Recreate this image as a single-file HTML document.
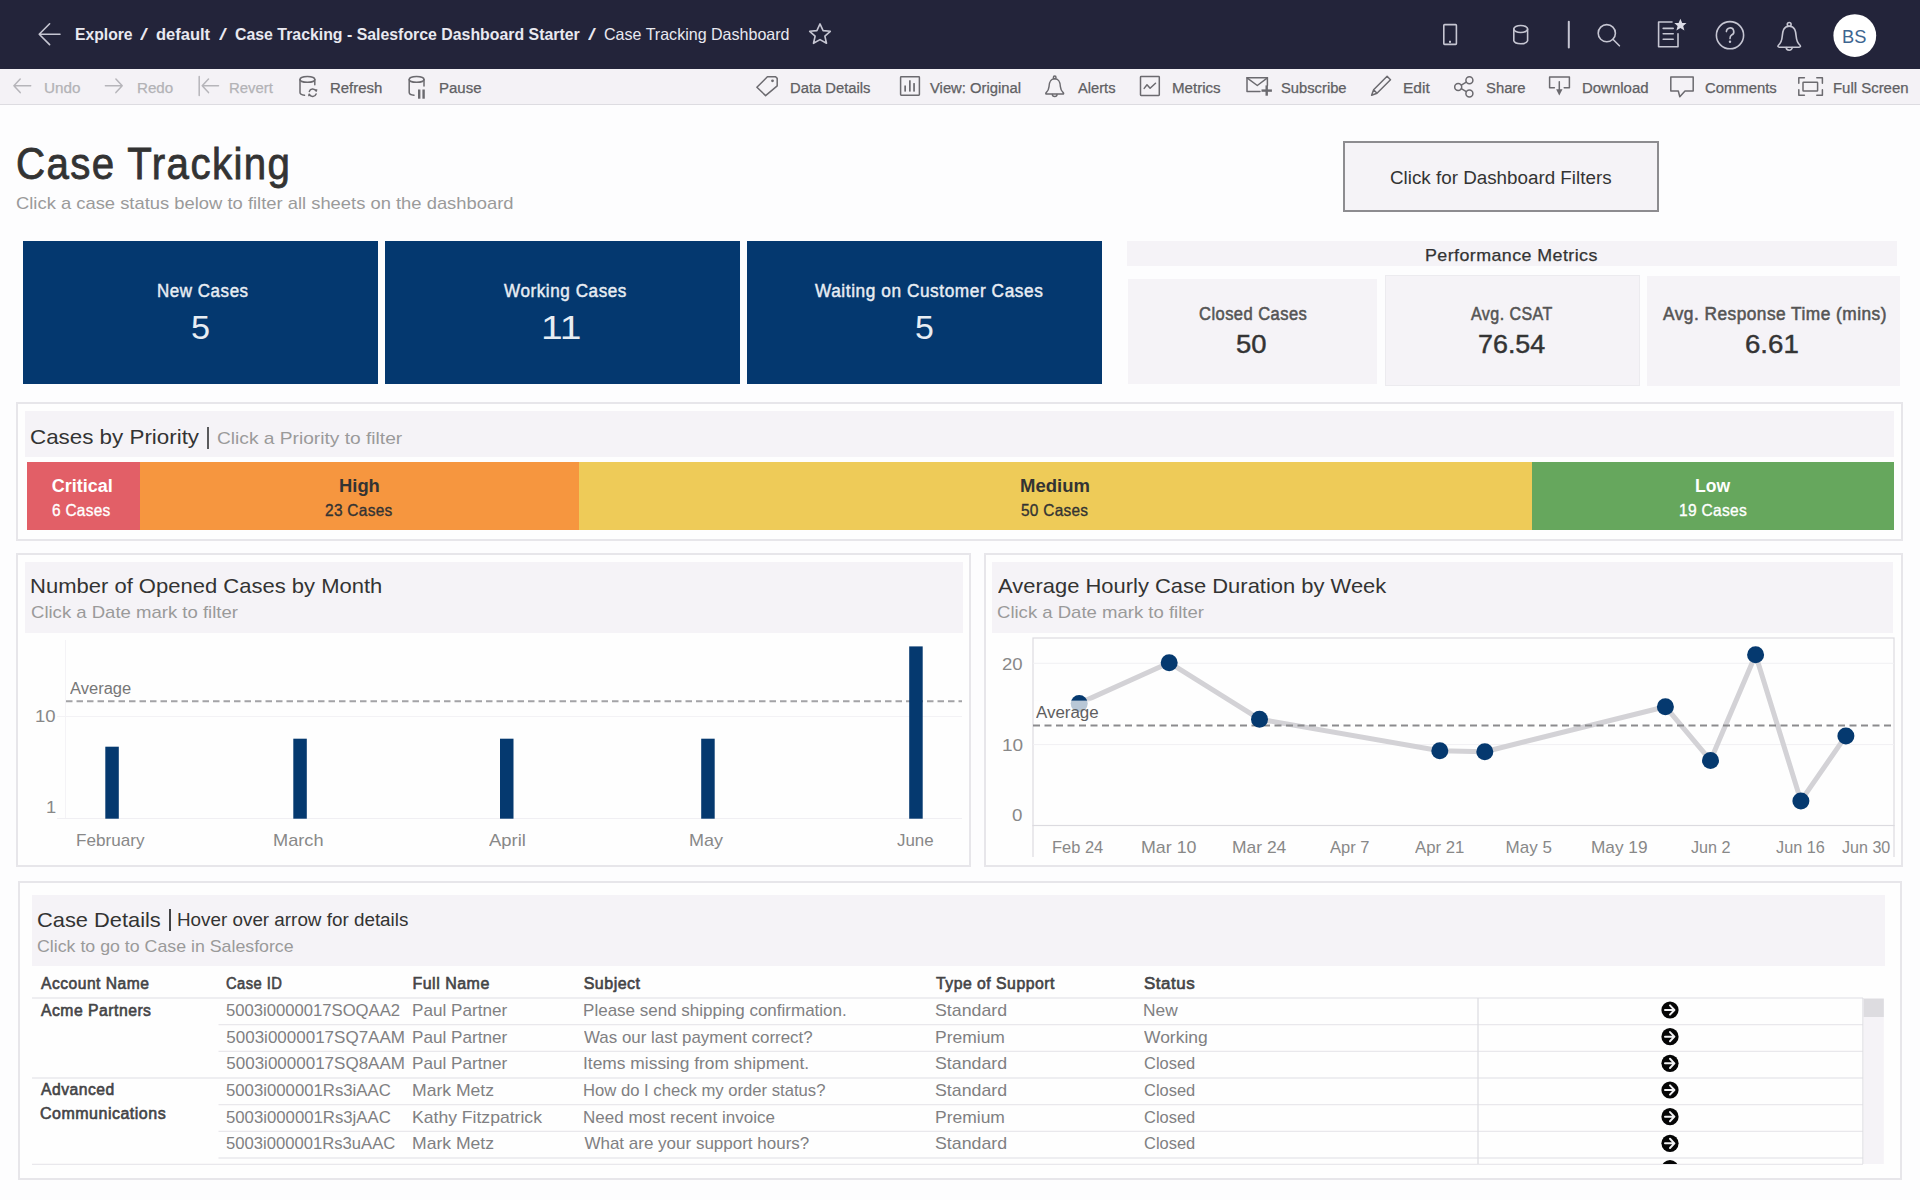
<!DOCTYPE html>
<html><head><meta charset="utf-8"><title>Case Tracking Dashboard</title>
<style>
*{margin:0;padding:0;box-sizing:border-box}
html,body{width:1920px;height:1200px;overflow:hidden}
body{background:#fdfdfe;font-family:"Liberation Sans",sans-serif;position:relative}
.a{position:absolute}
.t{position:absolute;white-space:nowrap;line-height:1;transform-origin:0 0}
</style></head><body>
<div class="a" style="left:0px;top:0px;width:1920px;height:69px;background:#23243a"></div>
<div class="a" style="left:0px;top:69px;width:1920px;height:35px;background:#f4f2f6"></div>
<div class="a" style="left:0px;top:104px;width:1920px;height:1px;background:#dddce1"></div>
<div class="a" style="left:1343px;top:141px;width:316px;height:71px;background:#f5f3f7;border:2px solid #8d8c90"></div>
<div class="a" style="left:23px;top:241px;width:355px;height:143px;background:#04386f"></div>
<div class="a" style="left:385px;top:241px;width:355px;height:143px;background:#04386f"></div>
<div class="a" style="left:747px;top:241px;width:355px;height:143px;background:#04386f"></div>
<div class="a" style="left:1127px;top:241px;width:770px;height:25px;background:#f5f3f7"></div>
<div class="a" style="left:1128px;top:279px;width:249px;height:105px;background:#f5f3f7"></div>
<div class="a" style="left:1385px;top:275px;width:255px;height:111px;background:#f5f3f7;border:1px solid #ecebef"></div>
<div class="a" style="left:1647px;top:276px;width:253px;height:110px;background:#f5f3f7"></div>
<div class="a" style="left:16px;top:402px;width:1887px;height:139px;border:2px solid #e7e6ea;background:#fefefe"></div>
<div class="a" style="left:25px;top:411px;width:1869px;height:46px;background:#f5f3f7"></div>
<div class="a" style="left:27px;top:462px;width:113px;height:68px;background:#e25f67"></div>
<div class="a" style="left:140px;top:462px;width:439px;height:68px;background:#f6963f"></div>
<div class="a" style="left:579px;top:462px;width:953px;height:68px;background:#eecb58"></div>
<div class="a" style="left:1532px;top:462px;width:362px;height:68px;background:#66a75d"></div>
<div class="a" style="left:16px;top:553px;width:955px;height:314px;border:2px solid #e7e6ea;background:#fefefe"></div>
<div class="a" style="left:25px;top:562px;width:938px;height:71px;background:#f5f3f7"></div>
<div class="a" style="left:65px;top:640px;width:1px;height:179px;background:#f4f3f6"></div>
<div class="a" style="left:57px;top:716px;width:905px;height:1px;background:#f3f2f5"></div>
<div class="a" style="left:57px;top:818px;width:905px;height:1px;background:#f0eff3"></div>
<div class="a" style="left:984px;top:553px;width:919px;height:314px;border:2px solid #e7e6ea;background:#fefefe"></div>
<div class="a" style="left:992px;top:562px;width:901px;height:71px;background:#f5f3f7"></div>
<div class="a" style="left:18px;top:881px;width:1884px;height:299px;border:2px solid #e7e6ea;background:#fefefe"></div>
<div class="a" style="left:32px;top:895px;width:1853px;height:71px;background:#f5f3f7"></div>
<div class="a" style="left:207px;top:427px;width:2px;height:22px;background:#5a5a5c"></div>
<div class="a" style="left:169px;top:909px;width:2px;height:22px;background:#444446"></div>

<svg class="a" style="left:0;top:0" width="1920" height="1200" viewBox="0 0 1920 1200">
 <!-- bar chart -->
 <line x1="66" y1="701.3" x2="962" y2="701.3" stroke="#a3a3a6" stroke-width="2" stroke-dasharray="6.5 4"/>
 <g fill="#05396f">
  <rect x="105.3" y="746.7" width="13.5" height="72"/>
  <rect x="293.3" y="738.7" width="13.5" height="80"/>
  <rect x="500" y="738.7" width="13.5" height="80"/>
  <rect x="701.2" y="738.7" width="13.5" height="80"/>
  <rect x="909.2" y="646.4" width="13.5" height="172.3"/>
 </g>
 <!-- line chart -->
 <rect x="1033" y="638" width="861" height="187.5" fill="none" stroke="#dcdbe0" stroke-width="1.2"/>
 <line x1="1033" y1="825" x2="1033" y2="857" stroke="#dcdbe0" stroke-width="1.2"/>
 <line x1="1894" y1="825" x2="1894" y2="857" stroke="#dcdbe0" stroke-width="1.2"/>
 <line x1="1033" y1="663.3" x2="1894" y2="663.3" stroke="#f1f0f3" stroke-width="1"/>
 <line x1="1033" y1="744.6" x2="1894" y2="744.6" stroke="#f1f0f3" stroke-width="1"/>
 <polyline fill="none" stroke="#d3d2d6" stroke-width="5" stroke-linejoin="round" points="1079.2,703.4 1169.2,662.7 1259.5,719.2 1439.8,750.7 1484.8,751.7 1665.4,706.7 1710.5,760.4 1755.6,654.7 1800.9,800.9 1845.9,735.9"/>
 <line x1="1033" y1="725.5" x2="1894" y2="725.5" stroke="#8b8b8e" stroke-width="2.2" stroke-dasharray="7 4.5"/>
 <g fill="#05396f">
  <circle cx="1079.2" cy="703.4" r="8.5"/>
  <circle cx="1169.2" cy="662.7" r="8.5"/>
  <circle cx="1259.5" cy="719.2" r="8.5"/>
  <circle cx="1439.8" cy="750.7" r="8.5"/>
  <circle cx="1484.8" cy="751.7" r="8.5"/>
  <circle cx="1665.4" cy="706.7" r="8.5"/>
  <circle cx="1710.5" cy="760.4" r="8.5"/>
  <circle cx="1755.6" cy="654.7" r="8.5"/>
  <circle cx="1800.9" cy="800.9" r="8.5"/>
  <circle cx="1845.9" cy="735.9" r="8.5"/>
 </g>
 <rect x="1034" y="700.6" width="65" height="22" fill="#fefefe" fill-opacity="0.72"/>
</svg>


<svg class="a" style="left:0;top:0" width="1920" height="110" viewBox="0 0 1920 110">
 <g fill="none" stroke="#c6c6d2" stroke-width="1.6" stroke-linecap="round" stroke-linejoin="round">
  <path d="M60 34.2 H39.2 M49.6 23.8 L39.2 34.2 L49.6 44.6"/>
  <path d="M820 23.9 L823.1 30.6 L830.3 31.3 L824.9 36.2 L826.5 43.3 L820 39.6 L813.5 43.3 L815.1 36.2 L809.7 31.3 L816.9 30.6 Z"/>
  <rect x="1443.8" y="24.6" width="12.6" height="19.8" rx="0.8"/>
  <path d="M1513.8 29 V40.8 A7 3.6 0 0 0 1527.6 40.8 V29"/>
  <ellipse cx="1520.7" cy="29" rx="6.9" ry="3.5"/>
  <circle cx="1606.8" cy="33.2" r="8.6"/>
  <path d="M1612.9 39.3 L1619.4 45.8"/>
  <path d="M1672 22 H1658.6 V46.8 H1678 V33.8"/>
  <path d="M1663.2 28.4 H1673.2 M1663.2 33.8 H1673.2 M1663.2 39.2 H1673.2"/>
  <circle cx="1730" cy="35.2" r="13.6"/>
  <path d="M1726.4 31.6 A3.7 3.7 0 1 1 1731.6 35 C1730.3 35.8 1730 36.6 1730 38.6"/>
  <path d="M1789.2 26.3 C1783.5 26.3 1782.6 31 1782.2 36.5 C1781.8 41.5 1781 42.8 1778.6 45 C1777.4 46.2 1778 47.2 1779.3 47.2 H1799.1 C1800.4 47.2 1801 46.2 1799.8 45 C1797.4 42.8 1796.6 41.5 1796.2 36.5 C1795.8 31 1794.9 26.3 1789.2 26.3 Z"/>
  <circle cx="1789.2" cy="24.4" r="1.9"/>
  <path d="M1786.2 47.6 A3 2.6 0 0 0 1792.2 47.6"/>
  <line x1="1568.8" y1="21.8" x2="1568.8" y2="47.4" stroke-width="2"/>
 </g>
 <circle cx="1730" cy="41.7" r="1.2" fill="#c6c6d2"/>
 <rect x="1449" y="40.8" width="2" height="2" fill="#c6c6d2"/>
 <path d="M1680.4 18.8 L1682.2 22.9 L1686.5 23.1 L1683.2 26 L1684.4 30.4 L1680.4 28 L1676.4 30.4 L1677.6 26 L1674.3 23.1 L1678.6 22.9 Z" fill="#dcdce6"/>
 <circle cx="1854.8" cy="35.6" r="21.4" fill="#ffffff"/>
 <!-- toolbar -->
 <g fill="none" stroke="#b6b5ba" stroke-width="1.5" stroke-linecap="round" stroke-linejoin="round">
  <path d="M30.7 85.8 H13.9 M20.2 79 L13.9 85.8 L20.2 92.6"/>
  <path d="M105.4 85.8 H122.2 M115.9 79 L122.2 85.8 L115.9 92.6"/>
  <path d="M199.2 76.4 V95.6 M218.5 85.8 H202.2 M208.5 79 L202.2 85.8 L208.5 92.6"/>
 </g>
 <g fill="none" stroke="#6b6a6f" stroke-width="1.5" stroke-linecap="round" stroke-linejoin="round">
  <ellipse cx="307.4" cy="79.4" rx="7.4" ry="2.9"/>
  <path d="M300 79.4 V92.5 C300 94 301.8 95 304.5 95.3"/>
  <path d="M314.8 79.4 V84.8"/>
  <path d="M309.3 91.4 A3.6 3.6 0 0 1 316 91 M316.1 93.9 A3.6 3.6 0 0 1 309.4 94.3"/>
  <ellipse cx="416.6" cy="79.4" rx="7.4" ry="2.9"/>
  <path d="M409.2 79.4 V92.5 C409.2 94 411 95 414 95.3"/>
  <path d="M424 79.4 V86"/>
  <polygon points="756.9,87.3 767.4,76.8 775.6,76.8 777.2,78.4 777.2,85.9 765.6,95.6"/>
  <rect x="900.6" y="76.8" width="18.8" height="18.4" rx="0.6"/>
  <path d="M1054.7 78.8 C1050 78.8 1049.3 82.5 1049 86.8 C1048.7 90.3 1047.6 91.4 1046.2 92.6 C1045.4 93.4 1045.8 94.1 1046.7 94.1 H1062.7 C1063.6 94.1 1064 93.4 1063.2 92.6 C1061.8 91.4 1060.7 90.3 1060.4 86.8 C1060.1 82.5 1059.4 78.8 1054.7 78.8 Z"/>
  <circle cx="1054.7" cy="77.4" r="1.3"/>
  <path d="M1052.4 94.4 A2.3 2 0 0 0 1057 94.4"/>
  <rect x="1140.5" y="76.6" width="18.8" height="18.8" rx="0.6"/>
  <path d="M1144.2 88.4 L1147 84.8 L1150.1 88.2 L1155.5 83.3"/>
  <path d="M1260 91.5 H1247 V77.8 H1267.4 V85.4"/>
  <path d="M1247 77.8 L1257.3 85.5 L1267.4 77.8"/>
  <path d="M1373.6 89.8 L1387.1 76.3 L1390.5 79.7 L1377 93.2 Z M1373.6 89.8 L1371.6 95.3 L1377 93.2"/>
  <circle cx="1469.4" cy="80.2" r="3.5"/>
  <circle cx="1458.2" cy="86.9" r="3.5"/>
  <circle cx="1469.4" cy="93.6" r="3.5"/>
  <path d="M1461.3 85.1 L1466.3 82.1 M1461.3 88.7 L1466.3 91.7"/>
  <path d="M1554.4 87.8 H1549.6 V76.9 H1569.4 V87.8 H1564.2"/>
  <path d="M1559.3 81.8 V90"/>
  <path d="M1670.8 76.9 H1693.2 V91 H1685 L1679.8 96.8 L1678.3 91 H1670.8 Z"/>
  <path d="M1798.8 83.2 V77.8 H1804.4 M1816.8 77.8 H1822.4 V83.2 M1822.4 89.8 V95.2 H1816.8 M1804.4 95.2 H1798.8 V89.8"/>
  <rect x="1803" y="82.2" width="14.6" height="8.8" rx="0.6"/>
 </g>
 <g fill="#6b6a6f">
  <circle cx="772.5" cy="80.8" r="1.4"/>
  <rect x="904.3" y="85.5" width="1.7" height="6.1"/>
  <rect x="909" y="80.3" width="1.7" height="11.3"/>
  <rect x="913.2" y="83.1" width="1.7" height="8.5"/>
  <rect x="1261.5" y="89.4" width="10.4" height="2.4"/>
  <rect x="1265.5" y="85.4" width="2.4" height="10.3"/>
  <rect x="418" y="89.5" width="2.4" height="9.2"/>
  <rect x="422.4" y="89.5" width="2.4" height="9.2"/>
  <polygon points="1556.1,89.2 1562.5,89.2 1559.3,95.6"/>
  <polygon points="314.6,89.3 317.4,89.2 316.9,92"/>
  <polygon points="310.8,96.1 308,96.2 308.5,93.4"/>
 </g>
</svg>


<svg class="a" style="left:0;top:0" width="1920" height="1200" viewBox="0 0 1920 1200">
 <g stroke="#e9e8ec" stroke-width="1.3">
  <line x1="32" y1="998" x2="1863" y2="998"/>
  <line x1="218.5" y1="1024.6" x2="1863" y2="1024.6"/>
  <line x1="218.5" y1="1051.3" x2="1863" y2="1051.3"/>
  <line x1="32" y1="1078" x2="1863" y2="1078"/>
  <line x1="218.5" y1="1104.7" x2="1863" y2="1104.7"/>
  <line x1="218.5" y1="1131.4" x2="1863" y2="1131.4"/>
  <line x1="218.5" y1="1158" x2="1863" y2="1158"/>
  <line x1="32" y1="1164.3" x2="1863" y2="1164.3"/>
 </g>
 <line x1="1478" y1="998" x2="1478" y2="1164" stroke="#dedde2" stroke-width="1.3"/>
 <line x1="1863" y1="998" x2="1863" y2="1164" stroke="#dedde2" stroke-width="1.3"/>
 <rect x="1863.6" y="998.6" width="20.2" height="165.4" fill="#f5f3f7"/>
 <rect x="1863.6" y="998.6" width="20.2" height="18.4" fill="#dddce0"/>
 <circle cx="1670" cy="1010.00" r="8.6" fill="#050505"/><path d="M1665 1010.00 H1674 M1670 1005.40 L1674.4 1010.00 L1670 1014.60" fill="none" stroke="#f2f2f4" stroke-width="2" stroke-linecap="round" stroke-linejoin="round"/>
 <circle cx="1670" cy="1036.67" r="8.6" fill="#050505"/><path d="M1665 1036.67 H1674 M1670 1032.07 L1674.4 1036.67 L1670 1041.27" fill="none" stroke="#f2f2f4" stroke-width="2" stroke-linecap="round" stroke-linejoin="round"/>
 <circle cx="1670" cy="1063.34" r="8.6" fill="#050505"/><path d="M1665 1063.34 H1674 M1670 1058.74 L1674.4 1063.34 L1670 1067.94" fill="none" stroke="#f2f2f4" stroke-width="2" stroke-linecap="round" stroke-linejoin="round"/>
 <circle cx="1670" cy="1090.01" r="8.6" fill="#050505"/><path d="M1665 1090.01 H1674 M1670 1085.41 L1674.4 1090.01 L1670 1094.61" fill="none" stroke="#f2f2f4" stroke-width="2" stroke-linecap="round" stroke-linejoin="round"/>
 <circle cx="1670" cy="1116.68" r="8.6" fill="#050505"/><path d="M1665 1116.68 H1674 M1670 1112.08 L1674.4 1116.68 L1670 1121.28" fill="none" stroke="#f2f2f4" stroke-width="2" stroke-linecap="round" stroke-linejoin="round"/>
 <circle cx="1670" cy="1143.35" r="8.6" fill="#050505"/><path d="M1665 1143.35 H1674 M1670 1138.75 L1674.4 1143.35 L1670 1147.95" fill="none" stroke="#f2f2f4" stroke-width="2" stroke-linecap="round" stroke-linejoin="round"/>
</svg>

<div class="t" style="left:74.75px;top:26.43px;font-size:16.5px;color:#e9e9f0;font-weight:700;transform:scaleX(0.9517);">Explore</div>
<div class="t" style="left:140.00px;top:26.43px;font-size:16.5px;color:#e9e9f0;transform:scaleX(1.7391);">/</div>
<div class="t" style="left:156.00px;top:26.43px;font-size:16.5px;color:#e9e9f0;font-weight:700;">default</div>
<div class="t" style="left:218.50px;top:26.43px;font-size:16.5px;color:#e9e9f0;transform:scaleX(1.7391);">/</div>
<div class="t" style="left:234.92px;top:26.43px;font-size:16.5px;color:#e9e9f0;font-weight:700;transform:scaleX(0.9613);">Case Tracking - Salesforce Dashboard Starter</div>
<div class="t" style="left:587.50px;top:26.43px;font-size:16.5px;color:#e9e9f0;transform:scaleX(1.7391);">/</div>
<div class="t" style="left:604.42px;top:26.43px;font-size:16.5px;color:#e9e9f0;transform:scaleX(0.9726);">Case Tracking Dashboard</div>
<div class="t" style="left:44.21px;top:81.35px;font-size:14px;color:#b3b3b6;transform:scaleX(1.0884);-webkit-text-stroke:0.25px #b3b3b6;">Undo</div>
<div class="t" style="left:136.61px;top:81.35px;font-size:14px;color:#b3b3b6;transform:scaleX(1.0824);-webkit-text-stroke:0.25px #b3b3b6;">Redo</div>
<div class="t" style="left:229.33px;top:81.35px;font-size:14px;color:#b3b3b6;transform:scaleX(1.0638);-webkit-text-stroke:0.25px #b3b3b6;">Revert</div>
<div class="t" style="left:330.03px;top:81.35px;font-size:14px;color:#606063;transform:scaleX(1.0673);-webkit-text-stroke:0.25px #606063;">Refresh</div>
<div class="t" style="left:438.62px;top:81.35px;font-size:14px;color:#606063;transform:scaleX(1.0708);-webkit-text-stroke:0.25px #606063;">Pause</div>
<div class="t" style="left:789.64px;top:81.35px;font-size:14px;color:#606063;transform:scaleX(1.0555);-webkit-text-stroke:0.25px #606063;">Data Details</div>
<div class="t" style="left:930.30px;top:81.35px;font-size:14px;color:#606063;transform:scaleX(1.0563);-webkit-text-stroke:0.25px #606063;">View: Original</div>
<div class="t" style="left:1077.80px;top:81.35px;font-size:14px;color:#606063;transform:scaleX(1.0486);-webkit-text-stroke:0.25px #606063;">Alerts</div>
<div class="t" style="left:1171.51px;top:81.35px;font-size:14px;color:#606063;transform:scaleX(1.0779);-webkit-text-stroke:0.25px #606063;">Metrics</div>
<div class="t" style="left:1281.07px;top:81.35px;font-size:14px;color:#606063;transform:scaleX(1.0529);-webkit-text-stroke:0.25px #606063;">Subscribe</div>
<div class="t" style="left:1402.78px;top:81.35px;font-size:14px;color:#606063;transform:scaleX(1.1075);-webkit-text-stroke:0.25px #606063;">Edit</div>
<div class="t" style="left:1486.26px;top:81.35px;font-size:14px;color:#606063;transform:scaleX(1.0588);-webkit-text-stroke:0.25px #606063;">Share</div>
<div class="t" style="left:1582.22px;top:81.35px;font-size:14px;color:#606063;transform:scaleX(1.0684);-webkit-text-stroke:0.25px #606063;">Download</div>
<div class="t" style="left:1704.96px;top:81.35px;font-size:14px;color:#606063;transform:scaleX(1.0604);-webkit-text-stroke:0.25px #606063;">Comments</div>
<div class="t" style="left:1832.83px;top:81.35px;font-size:14px;color:#606063;transform:scaleX(1.0665);-webkit-text-stroke:0.25px #606063;">Full Screen</div>
<div class="t" style="left:15.61px;top:141.75px;font-size:44px;color:#333333;transform:scaleX(0.9154);letter-spacing:1.5px;-webkit-text-stroke:0.8px #333333;">Case Tracking</div>
<div class="t" style="left:15.84px;top:194.61px;font-size:17px;color:#9a9a9a;transform:scaleX(1.0811);">Click a case status below to filter all sheets on the dashboard</div>
<div class="t" style="left:1389.76px;top:168.86px;font-size:18px;color:#333333;transform:scaleX(1.0448);">Click for Dashboard Filters</div>
<div class="t" style="left:156.98px;top:282.46px;font-size:18px;color:#e8edf3;transform:scaleX(0.9406);letter-spacing:0.6px;-webkit-text-stroke:0.45px #e8edf3;">New Cases</div>
<div class="t" style="left:190.63px;top:310.77px;font-size:33px;color:#e8edf3;transform:scaleX(1.0385);">5</div>
<div class="t" style="left:504.20px;top:282.46px;font-size:18px;color:#e8edf3;transform:scaleX(0.9493);letter-spacing:0.6px;-webkit-text-stroke:0.45px #e8edf3;">Working Cases</div>
<div class="t" style="left:540.76px;top:310.77px;font-size:33px;color:#e8edf3;transform:scaleX(1.1829);">11</div>
<div class="t" style="left:814.80px;top:282.46px;font-size:18px;color:#e8edf3;transform:scaleX(0.9578);letter-spacing:0.6px;-webkit-text-stroke:0.45px #e8edf3;">Waiting on Customer Cases</div>
<div class="t" style="left:914.74px;top:310.77px;font-size:33px;color:#e8edf3;transform:scaleX(1.0260);">5</div>
<div class="t" style="left:1425.23px;top:246.71px;font-size:17px;color:#333333;transform:scaleX(1.0511);letter-spacing:0.4px;-webkit-text-stroke:0.25px #333333;">Performance Metrics</div>
<div class="t" style="left:1198.67px;top:305.36px;font-size:18px;color:#555555;transform:scaleX(0.9168);letter-spacing:0.5px;-webkit-text-stroke:0.55px #555555;">Closed Cases</div>
<div class="t" style="left:1235.50px;top:331.94px;font-size:25px;color:#333333;transform:scaleX(1.0964);-webkit-text-stroke:0.45px #383838;">50</div>
<div class="t" style="left:1471.00px;top:305.36px;font-size:18px;color:#555555;transform:scaleX(0.8893);letter-spacing:0.5px;-webkit-text-stroke:0.55px #555555;">Avg. CSAT</div>
<div class="t" style="left:1477.91px;top:331.94px;font-size:25px;color:#333333;transform:scaleX(1.0749);-webkit-text-stroke:0.45px #383838;">76.54</div>
<div class="t" style="left:1663.30px;top:305.36px;font-size:18px;color:#555555;transform:scaleX(0.9600);letter-spacing:0.5px;-webkit-text-stroke:0.55px #555555;">Avg. Response Time (mins)</div>
<div class="t" style="left:1744.87px;top:331.94px;font-size:25px;color:#333333;transform:scaleX(1.1048);-webkit-text-stroke:0.45px #383838;">6.61</div>
<div class="t" style="left:29.93px;top:426.02px;font-size:21px;color:#333333;transform:scaleX(1.0652);">Cases by Priority</div>
<div class="t" style="left:216.60px;top:429.61px;font-size:17px;color:#9a9a9a;transform:scaleX(1.1267);">Click a Priority to filter</div>
<div class="t" style="left:51.80px;top:476.76px;font-size:18px;color:#ffffff;font-weight:700;">Critical</div>
<div class="t" style="left:51.75px;top:502.23px;font-size:16.5px;color:#ffffff;transform:scaleX(0.9347);letter-spacing:0.3px;-webkit-text-stroke:0.35px #ffffff;">6 Cases</div>
<div class="t" style="left:338.77px;top:476.76px;font-size:18px;color:#333333;font-weight:700;transform:scaleX(1.0214);">High</div>
<div class="t" style="left:324.75px;top:502.23px;font-size:16.5px;color:#333333;transform:scaleX(0.9368);letter-spacing:0.3px;-webkit-text-stroke:0.35px #333333;">23 Cases</div>
<div class="t" style="left:1020.27px;top:476.76px;font-size:18px;color:#333333;font-weight:700;transform:scaleX(1.0275);">Medium</div>
<div class="t" style="left:1020.94px;top:502.23px;font-size:16.5px;color:#333333;transform:scaleX(0.9341);letter-spacing:0.3px;-webkit-text-stroke:0.35px #333333;">50 Cases</div>
<div class="t" style="left:1695.33px;top:476.76px;font-size:18px;color:#ffffff;font-weight:700;transform:scaleX(0.9745);">Low</div>
<div class="t" style="left:1678.87px;top:502.23px;font-size:16.5px;color:#ffffff;transform:scaleX(0.9421);letter-spacing:0.3px;-webkit-text-stroke:0.35px #ffffff;">19 Cases</div>
<div class="t" style="left:29.82px;top:575.02px;font-size:21px;color:#333333;transform:scaleX(1.0480);">Number of Opened Cases by Month</div>
<div class="t" style="left:30.73px;top:603.91px;font-size:17px;color:#9a9a9a;transform:scaleX(1.0899);">Click a Date mark to filter</div>
<div class="t" style="left:69.70px;top:680.86px;font-size:16px;color:#777777;transform:scaleX(1.0323);">Average</div>
<div class="t" style="left:35.41px;top:709.26px;font-size:16px;color:#888888;transform:scaleX(1.1564);">10</div>
<div class="t" style="left:45.63px;top:799.76px;font-size:16px;color:#888888;transform:scaleX(1.1429);">1</div>
<div class="t" style="left:76.49px;top:832.31px;font-size:17px;color:#888888;transform:scaleX(1.0071);">February</div>
<div class="t" style="left:273.21px;top:832.31px;font-size:17px;color:#888888;transform:scaleX(1.0696);">March</div>
<div class="t" style="left:488.50px;top:832.31px;font-size:17px;color:#888888;transform:scaleX(1.0841);">April</div>
<div class="t" style="left:689.32px;top:832.31px;font-size:17px;color:#888888;transform:scaleX(1.0579);">May</div>
<div class="t" style="left:897.20px;top:832.31px;font-size:17px;color:#888888;transform:scaleX(0.9942);">June</div>
<div class="t" style="left:998.20px;top:575.02px;font-size:21px;color:#333333;transform:scaleX(1.0450);">Average Hourly Case Duration by Week</div>
<div class="t" style="left:997.33px;top:603.91px;font-size:17px;color:#9a9a9a;transform:scaleX(1.0899);">Click a Date mark to filter</div>
<div class="t" style="left:1035.80px;top:704.66px;font-size:16px;color:#5e5e60;transform:scaleX(1.0562);">Average</div>
<div class="t" style="left:1002.27px;top:656.66px;font-size:16px;color:#888888;transform:scaleX(1.1586);">20</div>
<div class="t" style="left:1001.77px;top:738.36px;font-size:16px;color:#888888;transform:scaleX(1.1876);">10</div>
<div class="t" style="left:1012.30px;top:807.66px;font-size:16px;color:#888888;transform:scaleX(1.1688);">0</div>
<div class="t" style="left:1051.84px;top:838.61px;font-size:17px;color:#888888;transform:scaleX(0.9673);">Feb 24</div>
<div class="t" style="left:1140.84px;top:838.61px;font-size:17px;color:#888888;transform:scaleX(1.0480);">Mar 10</div>
<div class="t" style="left:1231.87px;top:838.61px;font-size:17px;color:#888888;transform:scaleX(1.0263);">Mar 24</div>
<div class="t" style="left:1329.70px;top:838.61px;font-size:17px;color:#888888;transform:scaleX(0.9704);">Apr 7</div>
<div class="t" style="left:1415.30px;top:838.61px;font-size:17px;color:#888888;transform:scaleX(0.9831);">Apr 21</div>
<div class="t" style="left:1505.60px;top:838.61px;font-size:17px;color:#888888;">May 5</div>
<div class="t" style="left:1590.68px;top:838.61px;font-size:17px;color:#888888;transform:scaleX(1.0132);">May 19</div>
<div class="t" style="left:1690.71px;top:838.61px;font-size:17px;color:#888888;transform:scaleX(0.9523);">Jun 2</div>
<div class="t" style="left:1776.31px;top:838.61px;font-size:17px;color:#888888;transform:scaleX(0.9564);">Jun 16</div>
<div class="t" style="left:1841.71px;top:838.61px;font-size:17px;color:#888888;transform:scaleX(0.9465);">Jun 30</div>
<div class="t" style="left:36.96px;top:908.92px;font-size:21px;color:#333333;transform:scaleX(1.0396);">Case Details</div>
<div class="t" style="left:177.23px;top:911.46px;font-size:18px;color:#333333;transform:scaleX(1.0466);">Hover over arrow for details</div>
<div class="t" style="left:37.16px;top:937.61px;font-size:17px;color:#9a9a9a;transform:scaleX(1.0446);">Click to go to Case in Salesforce</div>
<div class="t" style="left:40.80px;top:975.66px;font-size:16px;color:#444446;transform:scaleX(0.9769);letter-spacing:0.5px;-webkit-text-stroke:0.6px #444446;">Account Name</div>
<div class="t" style="left:226.46px;top:975.66px;font-size:16px;color:#444446;transform:scaleX(0.9200);letter-spacing:0.5px;-webkit-text-stroke:0.6px #444446;">Case ID</div>
<div class="t" style="left:412.41px;top:975.66px;font-size:16px;color:#444446;letter-spacing:0.5px;-webkit-text-stroke:0.6px #444446;">Full Name</div>
<div class="t" style="left:583.70px;top:975.66px;font-size:16px;color:#444446;letter-spacing:0.5px;-webkit-text-stroke:0.6px #444446;">Subject</div>
<div class="t" style="left:935.80px;top:975.66px;font-size:16px;color:#444446;transform:scaleX(0.9865);letter-spacing:0.5px;-webkit-text-stroke:0.6px #444446;">Type of Support</div>
<div class="t" style="left:1143.66px;top:975.66px;font-size:16px;color:#444446;transform:scaleX(1.0587);letter-spacing:0.5px;-webkit-text-stroke:0.6px #444446;">Status</div>
<div class="t" style="left:40.80px;top:1002.66px;font-size:16px;color:#444446;transform:scaleX(0.9837);letter-spacing:0.5px;-webkit-text-stroke:0.6px #444446;">Acme Partners</div>
<div class="t" style="left:40.80px;top:1082.46px;font-size:16px;color:#444446;transform:scaleX(0.9801);letter-spacing:0.5px;-webkit-text-stroke:0.6px #444446;">Advanced</div>
<div class="t" style="left:40.00px;top:1106.46px;font-size:16px;color:#444446;letter-spacing:0.5px;-webkit-text-stroke:0.6px #444446;">Communications</div>
<div class="t" style="left:226.31px;top:1002.01px;font-size:17px;color:#808082;transform:scaleX(0.9793);">5003i0000017SOQAA2</div>
<div class="t" style="left:412.39px;top:1002.01px;font-size:17px;color:#808082;transform:scaleX(1.0082);">Paul Partner</div>
<div class="t" style="left:583.09px;top:1002.01px;font-size:17px;color:#808082;">Please send shipping confirmation.</div>
<div class="t" style="left:935.37px;top:1002.01px;font-size:17px;color:#808082;transform:scaleX(1.0440);">Standard</div>
<div class="t" style="left:1143.07px;top:1002.01px;font-size:17px;color:#808082;transform:scaleX(1.0204);">New</div>
<div class="t" style="left:226.30px;top:1028.68px;font-size:17px;color:#808082;">5003i0000017SQ7AAM</div>
<div class="t" style="left:412.39px;top:1028.68px;font-size:17px;color:#808082;transform:scaleX(1.0082);">Paul Partner</div>
<div class="t" style="left:584.40px;top:1028.68px;font-size:17px;color:#808082;transform:scaleX(0.9946);">Was our last payment correct?</div>
<div class="t" style="left:934.76px;top:1028.68px;font-size:17px;color:#808082;transform:scaleX(1.0282);">Premium</div>
<div class="t" style="left:1144.40px;top:1028.68px;font-size:17px;color:#808082;transform:scaleX(1.0265);">Working</div>
<div class="t" style="left:226.30px;top:1055.35px;font-size:17px;color:#808082;">5003i0000017SQ8AAM</div>
<div class="t" style="left:412.39px;top:1055.35px;font-size:17px;color:#808082;transform:scaleX(1.0082);">Paul Partner</div>
<div class="t" style="left:582.87px;top:1055.35px;font-size:17px;color:#808082;transform:scaleX(1.0232);">Items missing from shipment.</div>
<div class="t" style="left:935.37px;top:1055.35px;font-size:17px;color:#808082;transform:scaleX(1.0440);">Standard</div>
<div class="t" style="left:1143.63px;top:1055.35px;font-size:17px;color:#808082;transform:scaleX(0.9674);">Closed</div>
<div class="t" style="left:226.31px;top:1082.02px;font-size:17px;color:#808082;transform:scaleX(0.9849);">5003i000001Rs3iAAC</div>
<div class="t" style="left:412.36px;top:1082.02px;font-size:17px;color:#808082;transform:scaleX(1.0332);">Mark Metz</div>
<div class="t" style="left:583.13px;top:1082.02px;font-size:17px;color:#808082;transform:scaleX(0.9793);">How do I check my order status?</div>
<div class="t" style="left:935.37px;top:1082.02px;font-size:17px;color:#808082;transform:scaleX(1.0440);">Standard</div>
<div class="t" style="left:1143.63px;top:1082.02px;font-size:17px;color:#808082;transform:scaleX(0.9674);">Closed</div>
<div class="t" style="left:226.31px;top:1108.69px;font-size:17px;color:#808082;transform:scaleX(0.9849);">5003i000001Rs3jAAC</div>
<div class="t" style="left:412.36px;top:1108.69px;font-size:17px;color:#808082;transform:scaleX(1.0342);">Kathy Fitzpatrick</div>
<div class="t" style="left:583.10px;top:1108.69px;font-size:17px;color:#808082;">Need most recent invoice</div>
<div class="t" style="left:934.76px;top:1108.69px;font-size:17px;color:#808082;transform:scaleX(1.0282);">Premium</div>
<div class="t" style="left:1143.63px;top:1108.69px;font-size:17px;color:#808082;transform:scaleX(0.9674);">Closed</div>
<div class="t" style="left:226.31px;top:1135.36px;font-size:17px;color:#808082;transform:scaleX(0.9785);">5003i000001Rs3uAAC</div>
<div class="t" style="left:412.36px;top:1135.36px;font-size:17px;color:#808082;transform:scaleX(1.0332);">Mark Metz</div>
<div class="t" style="left:584.40px;top:1135.36px;font-size:17px;color:#808082;">What are your support hours?</div>
<div class="t" style="left:935.37px;top:1135.36px;font-size:17px;color:#808082;transform:scaleX(1.0440);">Standard</div>
<div class="t" style="left:1143.63px;top:1135.36px;font-size:17px;color:#808082;transform:scaleX(0.9674);">Closed</div>
<div class="t" style="left:1842.46px;top:27.22px;font-size:19px;color:#3d6590;transform:scaleX(0.9622);">BS</div>
<div class="a" style="left:1650px;top:1158px;width:40px;height:6px;overflow:hidden"><svg width="40" height="20" style="position:absolute;left:0;top:0"><circle cx="20" cy="10.7" r="8.6" fill="#050505"/></svg></div>
</body></html>
